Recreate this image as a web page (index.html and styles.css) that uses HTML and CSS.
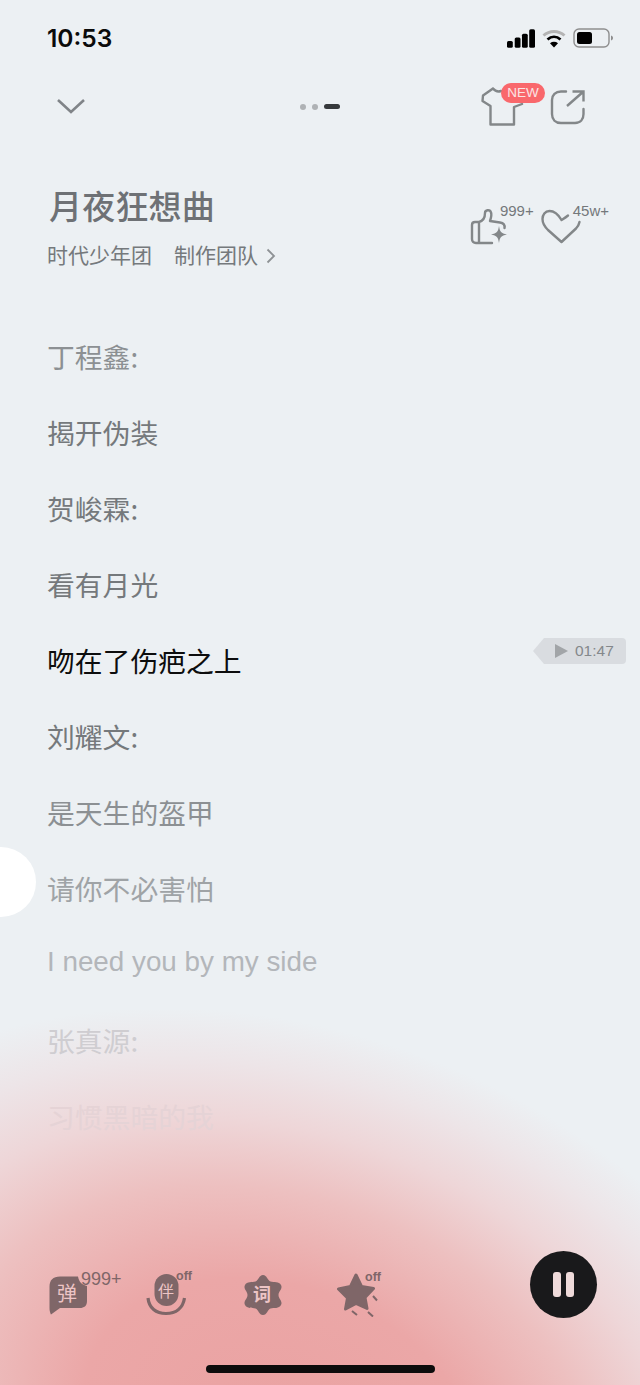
FILE: index.html
```html
<!DOCTYPE html>
<html lang="zh-CN">
<head>
    <meta charset="UTF-8">
    <meta name="viewport" content="width=device-width, initial-scale=1.0">
    <title>月夜狂想曲</title>
    <link rel="stylesheet" href="styles.css">
</head>
<body>
    <div class="page">
        <!-- status bar -->
        <div class="status">
            <span class="clock">10:53</span>
            <div class="status-icons">
                <svg width="28" height="19" viewBox="0 0 29 19">
                    <rect x="0" y="12" width="6" height="7" rx="1.6" fill="#000"/>
                    <rect x="8" y="8.500" width="6" height="10.500" rx="1.600" fill="#000"/>
                    <rect x="15.500" y="4.500" width="6" height="14.500" rx="1.600" fill="#000"/>
                    <rect x="23" y="0" width="6" height="19" rx="1.600" fill="#000"/>
                </svg>
                <svg width="24" height="19" viewBox="0 0 24 19" fill="none">
                    <path d="M1.500 6.500C7.500 1 16.500 1 22.500 6.500" stroke="#b4b4b4" stroke-width="3"/>
                    <path d="M5.500 10.500C9.500 7 14.500 7 18.500 10.500" stroke="#000" stroke-width="2.800"/>
                    <path d="M12 18.500L8 14.200C10.400 12.300 13.600 12.300 16 14.200Z" fill="#000"/>
                </svg>
                <svg width="41" height="20" viewBox="0 0 41 20" fill="none">
                    <rect x="1" y="1" width="35" height="18" rx="5" stroke="#8e8e8e" stroke-width="1.400"/>
                    <rect x="4" y="4" width="15" height="12" rx="2.500" fill="#000"/>
                    <path d="M38 7.500C39.500 8 40 9 40 10C40 11 39.500 12 38 12.500Z" fill="#8e8e8e"/>
                </svg>
            </div>
        </div>

        <!-- top nav -->
        <div class="nav">
            <svg class="nav-back" width="30" height="18" viewBox="0 0 30 18" fill="none">
                <path d="M2 3L15 15L28 3" stroke="#808488" stroke-width="2.600"/>
            </svg>
            <div class="dots">
                <span class="dot"></span>
                <span class="dot"></span>
                <span class="dot-on"></span>
            </div>
            <div class="nav-right">
                <div class="shirt">
                    <svg width="44" height="40" viewBox="0 0 44 40" fill="none">
                        <path d="M12 1.500L2 8.500L1.500 14L9.500 19V37.500H33V20L41 17M12 1.500C14 4 17 5 20 4" stroke="#838789" stroke-width="2.400" stroke-linejoin="round" stroke-linecap="round"/>
                    </svg>
                    <span class="badge-new">NEW</span>
                </div>
                <svg class="share" width="36" height="36" viewBox="0 0 36 36" fill="none">
                    <path d="M16 2.500H11C5.500 2.500 2 6 2 11V25C2 30.500 5.500 34 11 34H25C30.500 34 33.500 30.500 33.500 25V20" stroke="#838789" stroke-width="2.400" stroke-linecap="round"/>
                    <path d="M17 17L33.500 2.500M22.500 2.500H33.500V12.500" stroke="#838789" stroke-width="2.400"/>
                </svg>
            </div>
        </div>

        <!-- song heading -->
        <div class="song">
            <div class="song-info">
                <h1 class="song-title">月夜狂想曲</h1>
                <div class="song-meta">
                    <span>时代少年团</span>
                    <span class="team">制作团队</span>
                    <svg width="10" height="16" viewBox="0 0 10 16" fill="none">
                        <path d="M1.500 1.500L8 8L1.500 14.500" stroke="#8e9295" stroke-width="1.800"/>
                    </svg>
                </div>
            </div>
            <div class="song-stats">
                <div class="stat stat-like">
                    <svg width="38" height="38" viewBox="0 0 38 38" fill="none">
                        <path d="M2 17C2 15 3 14 5 14H9V35H6C3.500 35 2 33.500 2 31ZM9 14C13 13 15 10 15 5C15 2 20 1 21 4.500C22 7 21 10 20 13L30 14.500C33 15 35 17 34.500 20M9 35H22" stroke="#838789" stroke-width="2.400" stroke-linejoin="round" stroke-linecap="round"/>
                        <path d="M29 18C30 24 31 25 37 26.500C31 28 30 29 29 35C28 29 27 28 21 26.500C27 25 28 24 29 18Z" fill="#838789"/>
                    </svg>
                    <span class="stat-num">999+</span>
                </div>
                <div class="stat stat-fav">
                    <svg width="42" height="36" viewBox="0 0 42 36" fill="none">
                        <path d="M27 7.500C24 10 22 11 20.500 12C17 6 13 3 8.500 3C4 3 1.500 7 1.500 11C1.500 15 3 18 7 22L20.500 34L35 20.500C37 18.500 38 16.500 38.500 14" stroke="#838789" stroke-width="2.400" stroke-linecap="round" stroke-linejoin="round"/>
                    </svg>
                    <span class="stat-num">45w+</span>
                </div>
            </div>
        </div>

        <!-- lyrics -->
        <div class="lyrics">
            <div class="line l-dim">丁程鑫:</div>
            <div class="line l-mid">揭开伪装</div>
            <div class="line l-mid">贺峻霖:</div>
            <div class="line l-mid">看有月光</div>
            <div class="line line-now">
                <span>吻在了伤疤之上</span>
                <div class="seek">
                    <svg class="seek-play" width="13" height="14" viewBox="0 0 13 14">
                        <path d="M0 0L13 7L0 14Z" fill="#a2a5a8"/>
                    </svg>
                    <span>01:47</span>
                </div>
            </div>
            <div class="line l-mid">刘耀文:</div>
            <div class="line l-dim">是天生的盔甲</div>
            <div class="line l-fade1">请你不必害怕</div>
            <div class="line l-fade2 latin">I need you by my side</div>
            <div class="line l-fade3">张真源:</div>
            <div class="line l-fade4">习惯黑暗的我</div>
        </div>

        <div class="side-tab"></div>

        <!-- bottom tools -->
        <div class="tools">
            <div class="tool tool-danmu">
                <svg width="40" height="40" viewBox="0 0 40 40">
                    <path d="M12 1.500H30C31 7 34 10 39 11V26C39 31 36 33 32 33H12L3 39.500C3 39.500 1.500 37 1.500 33V12C1.500 5 5 1.500 12 1.500Z" fill="#7f6668"/>
                </svg>
                <span class="tool-char">弹</span>
                <span class="tool-num">999+</span>
            </div>
            <div class="tool tool-mic">
                <svg width="40" height="42" viewBox="0 0 40 42" fill="none">
                    <rect x="8.500" y="0" width="24" height="32" rx="12" fill="#7f6668"/>
                    <path d="M2 24C3 34 10 39.500 20 39.500C30 39.500 37 34 38.500 24" stroke="#7f6668" stroke-width="3.200"/>
                </svg>
                <span class="tool-char small">伴</span>
                <span class="tool-off">off</span>
            </div>
            <div class="tool tool-word">
                <svg width="40" height="42" viewBox="0 0 40 42">
                    <path d="M20 1C24 1 24.500 6.500 27.500 7.500C31 8.500 36 7 38 11C40 15 35.500 17 35.500 21C35.500 25 40 27 38 31C36 35 31 33.500 27.500 34.500C24.500 35.500 24 41 20 41C16 41 15.500 35.500 12.500 34.500C9 33.500 4 35 2 31C0 27 4.500 25 4.500 21C4.500 17 0 15 2 11C4 7 9 8.500 12.500 7.500C15.500 6.500 16 1 20 1Z" fill="#7f6668"/>
                </svg>
                <span class="tool-char small">词</span>
            </div>
            <div class="tool tool-star">
                <svg width="42" height="44" viewBox="0 0 42 44" fill="none">
                    <path d="M19 2L24.500 13.500L36.500 15.500L28 24.500L30 35.500L19 30.500L8.500 36L10.500 25L1.500 16L13.500 13.500Z" fill="#7f6668" stroke="#7f6668" stroke-linejoin="round" stroke-width="3"/>
                    <path d="M36 23L40 27.500M31 39L36 43.500M15 38L20 42" stroke="#7f6668" stroke-width="2"/>
                </svg>
                <span class="tool-off">off</span>
            </div>
            <div class="pause">
                <span class="pause-bar"></span>
                <span class="pause-bar"></span>
            </div>
        </div>

        <div class="home-bar"></div>
    </div>
</body>
</html>
```

FILE: styles.css
```css
* {
    box-sizing: border-box;
}

body {
    margin: 0;
    font-family: "Liberation Sans", "Noto Sans CJK SC", sans-serif;
}

.page {
    position: relative;
    isolation: isolate;
    display: flex;
    flex-direction: column;
    width: 640px;
    height: 1385px;
    overflow: hidden;
    background-color: #ecf0f3;
}

/* tilted pink glow rising from the bottom edge */
.page::before {
    content: "";
    position: absolute;
    z-index: -1;
    top: 1030px;
    left: -280px;
    width: 1120px;
    height: 800px;
    background-image: radial-gradient(closest-side, #eaa2a2 0%, #eba7a7 36%, #edc0c0 58%, #eed6d8 74%, #ede5e8 88%, rgba(236, 240, 243, 0) 100%);
    transform: rotate(20deg);
}

/* status bar */
.status {
    display: flex;
    justify-content: space-between;
    align-items: center;
    height: 38px;
    margin-top: 19px;
    padding: 0 26px 0 47px;
}

.clock {
    font-family: Inter, "Liberation Sans", sans-serif;
    font-size: 24.500px;
    font-weight: 600;
    color: #0b0b0b;
}

.status-icons {
    display: flex;
    align-items: center;
    gap: 7px;
}

/* top nav */
.nav {
    display: flex;
    align-items: center;
    height: 40px;
    margin-top: 28px;
    padding: 0 54px 0 56px;
}

.nav-back {
    margin-top: 1px;
}

.dots {
    display: flex;
    align-items: center;
    gap: 6px;
    margin-left: 214px;
    margin-top: 3px;
}

.dot {
    width: 6px;
    height: 6px;
    border-radius: 50%;
    background-color: #afb2b5;
}

.dot-on {
    width: 16px;
    height: 5px;
    border-radius: 3px;
    background-color: #36393c;
}

.nav-right {
    display: flex;
    align-items: center;
    gap: 1px;
    margin-left: auto;
}

.shirt {
    position: relative;
    width: 68px;
    height: 40px;
    padding-top: 2px;
}

.share {
    margin-top: 3px;
}

.badge-new {
    position: absolute;
    top: -2px;
    left: 20px;
    width: 44px;
    height: 20px;
    border-radius: 10px;
    background-color: #f9686c;
    color: #fbe4e4;
    font-size: 13.500px;
    line-height: 20px;
    text-align: center;
}

/* song heading */
.song {
    display: flex;
    justify-content: space-between;
    margin-top: 63px;
    padding: 0 31px 0 47px;
}

.song-title {
    margin: 0 0 0 2px;
    font-size: 33px;
    line-height: 40px;
    font-weight: 500;
    color: #6e7175;
    letter-spacing: 0.200px;
}

.song-meta {
    display: flex;
    align-items: center;
    margin-top: 13px;
    font-size: 21px;
    line-height: 30px;
    color: #75797c;
}

.team {
    margin-left: 22px;
    margin-right: 8px;
}

.song-stats {
    display: flex;
    gap: 7px;
    padding-top: 16px;
}

.stat {
    display: flex;
    align-items: flex-start;
}

.stat svg {
    margin-top: 4px;
}

.stat-num {
    margin-top: -2px;
    margin-left: -8px;
    font-size: 15px;
    line-height: 18px;
    color: #74787b;
}

.stat-fav .stat-num {
    margin-left: -10px;
}

/* lyrics */
.lyrics {
    display: flex;
    flex-direction: column;
    margin-top: 47px;
    padding-left: 47px;
}

.line {
    display: flex;
    align-items: center;
    height: 76px;
    font-family: "Noto Sans CJK SC", sans-serif;
    font-size: 27.800px;
}

.l-mid {
    color: #75797c;
}

.l-dim {
    color: #8c9093;
}

.line-now {
    justify-content: space-between;
    padding-right: 14px;
    color: #0d0d0d;
}

.l-fade1 {
    color: #9fa3a6;
}

.l-fade2 {
    color: #b3b6ba;
}

.l-fade3 {
    color: #cfcdd1;
}

.l-fade4 {
    color: #e5d3d6;
}

.latin {
    height: 72px;
    margin-bottom: 4px;
    font-family: "Liberation Sans", sans-serif;
}

/* seek marker next to the current line */
.seek {
    display: flex;
    align-items: center;
    width: 93px;
    height: 26px;
    margin-bottom: 18px;
    padding-left: 22px;
    background-color: #d9dce0;
    color: #84888b;
    font-family: "Liberation Sans", sans-serif;
    font-size: 15.500px;
    clip-path: polygon(11px 0, 100% 0, 100% 100%, 11px 100%, 0 50%);
    border-radius: 0 4px 4px 0;
}

.seek-play {
    margin-right: 7px;
}

.side-tab {
    position: absolute;
    top: 847px;
    left: -34px;
    width: 70px;
    height: 70px;
    border-radius: 50%;
    background-color: #fff;
}

/* bottom tools */
.tools {
    display: flex;
    align-items: center;
    margin-top: auto;
    margin-bottom: 47px;
    padding: 0 43px 0 48px;
}

.tool {
    position: relative;
    display: flex;
    align-items: center;
    justify-content: center;
    width: 40px;
    height: 44px;
}

.tool-mic {
    margin-left: 58px;
}

.tool-word {
    margin-left: 57px;
}

.tool-star {
    margin-left: 54px;
    width: 42px;
}

.tool-char {
    position: absolute;
    top: 9px;
    left: 9px;
    font-size: 20px;
    line-height: 24px;
    color: #edc4c5;
}

.tool-char.small {
    top: 7px;
    left: 12px;
    font-size: 16px;
}

.tool-word .tool-char.small {
    top: 10px;
    left: 10px;
    font-size: 18px;
    font-weight: 700;
}

.tool-num {
    position: absolute;
    top: -3px;
    left: 33px;
    font-size: 18px;
    line-height: 18px;
    color: #7f6668;
}

.tool-off {
    position: absolute;
    top: -5px;
    left: 30px;
    font-size: 12.500px;
    line-height: 16px;
    font-weight: 700;
    color: #7f6668;
}

.tool-star .tool-off {
    top: -4px;
    left: 28px;
}

.pause {
    display: flex;
    align-items: center;
    justify-content: center;
    gap: 5px;
    width: 67px;
    height: 67px;
    margin-left: auto;
    margin-bottom: 20px;
    border-radius: 50%;
    background-color: #19191b;
}

.pause-bar {
    width: 8px;
    height: 25px;
    border-radius: 3px;
    background-color: #efdada;
}

.home-bar {
    position: absolute;
    bottom: 12px;
    left: 206px;
    width: 229px;
    height: 8px;
    border-radius: 4px;
    background-color: #0c0c0c;
}
```
